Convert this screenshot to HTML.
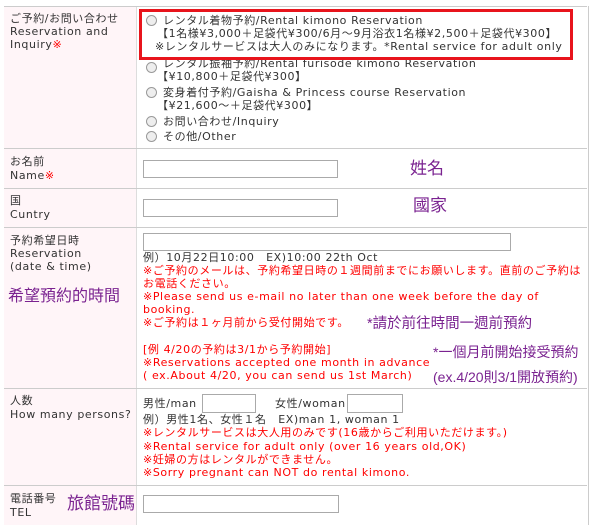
<!DOCTYPE html>
<html><head><meta charset="utf-8"><style>
body{margin:0;width:600px;height:525px;background:#fff;position:relative;overflow:hidden;font-family:"DejaVu Sans","Noto Sans CJK JP",sans-serif;font-size:11px;color:#333;letter-spacing:0.6px}
.a{position:absolute;white-space:nowrap;line-height:13px}
.r{color:#f00}
.p{color:#7a2290;font-size:15px;line-height:18px;font-family:"Liberation Sans","Noto Sans CJK TC",sans-serif;letter-spacing:0}
.lab{position:absolute;left:4px;width:132px;background:#fff5f8;border-right:1px solid #ddd}
.hl{position:absolute;left:4px;width:583px;height:1px;background:#ccc}
.in{position:absolute;border:1px solid #aaa;background:#fff;height:16px;box-sizing:border-box}
.rad{position:absolute;width:9px;height:9px;border-radius:50%;border:1px solid #999;background:#eee}
</style></head><body>
<div style="position:absolute;left:4px;top:6px;width:583px;height:519px;border-left:1px solid #ccc;border-right:1px solid #ccc"></div>
<div class="lab" style="top:7px;height:141px"></div>
<div class="lab" style="top:149px;height:39px"></div>
<div class="lab" style="top:189px;height:38px"></div>
<div class="lab" style="top:228px;height:160px"></div>
<div class="lab" style="top:389px;height:96px"></div>
<div class="lab" style="top:486px;height:39px"></div>
<div class="hl" style="top:6px"></div><div class="hl" style="top:148px"></div><div class="hl" style="top:188px"></div><div class="hl" style="top:227px"></div><div class="hl" style="top:388px"></div><div class="hl" style="top:485px"></div>

<div class="a" style="left:10px;top:12px">ご予約/お問い合わせ</div>
<div class="a" style="left:10px;top:25px">Reservation and</div>
<div class="a" style="left:10px;top:38px">Inquiry<span class="r">※</span></div>

<div class="rad" style="left:146px;top:15px"></div>
<div class="a" style="left:163px;top:14px">レンタル着物予約/Rental kimono Reservation</div>
<div class="a" style="left:157px;top:27px">【1名様¥3,000＋足袋代¥300/6月～9月浴衣1名様¥2,500＋足袋代¥300】</div>
<div class="a" style="left:155px;top:40px">※レンタルサービスは大人のみになります。*Rental service for adult only</div>
<div class="rad" style="left:146px;top:62px"></div>
<div class="a" style="left:163px;top:57px">レンタル振袖予約/Rental furisode kimono Reservation</div>
<div class="a" style="left:157px;top:70px">【¥10,800＋足袋代¥300】</div>
<div class="rad" style="left:146px;top:87px"></div>
<div class="a" style="left:163px;top:86px">変身着付予約/Gaisha &amp; Princess course Reservation</div>
<div class="a" style="left:157px;top:99px">【¥21,600～＋足袋代¥300】</div>
<div class="rad" style="left:146px;top:116px"></div>
<div class="a" style="left:163px;top:115px">お問い合わせ/Inquiry</div>
<div class="rad" style="left:146px;top:131px"></div>
<div class="a" style="left:163px;top:130px">その他/Other</div>
<div style="position:absolute;left:139px;top:9px;width:428px;height:45px;border:3px solid #e8141c;background:transparent"></div>

<div class="a" style="left:10px;top:155px">お名前</div>
<div class="a" style="left:10px;top:169px">Name<span class="r">※</span></div>
<div class="in" style="left:143px;top:160px;width:195px;height:18px"></div>
<div class="a p" style="left:410px;top:159px;font-size:17px;line-height:20px">姓名</div>

<div class="a" style="left:10px;top:194px">国</div>
<div class="a" style="left:10px;top:208px">Cuntry</div>
<div class="in" style="left:143px;top:199px;width:195px;height:18px"></div>
<div class="a p" style="left:413px;top:196px;font-size:17px;line-height:20px">國家</div>

<div class="a" style="left:10px;top:234px">予約希望日時</div>
<div class="a" style="left:10px;top:247px">Reservation</div>
<div class="a" style="left:10px;top:260px">(date &amp; time)</div>
<div class="a p" style="left:8px;top:287px;font-size:16px;line-height:20px">希望預約的時間</div>
<div class="in" style="left:143px;top:233px;width:368px;height:18px"></div>
<div class="a" style="left:143px;top:251px">例）10月22日10:00　EX)10:00 22th Oct</div>
<div class="a r" style="left:143px;top:264px">※ご予約のメールは、予約希望日時の１週間前までにお願いします。直前のご予約は</div>
<div class="a r" style="left:143px;top:277px">お電話ください。</div>
<div class="a r" style="left:143px;top:290px">※Please send us e-mail no later than one week before the day of</div>
<div class="a r" style="left:143px;top:303px">booking.</div>
<div class="a r" style="left:143px;top:316px">※ご予約は１ヶ月前から受付開始です。</div>
<div class="a p" style="left:367px;top:315px;font-size:14.5px">*請於前往時間一週前預約</div>
<div class="a r" style="left:143px;top:343px">[例 4/20の予約は3/1から予約開始]</div>
<div class="a r" style="left:143px;top:356px">※Reservations accepted one month in advance</div>
<div class="a r" style="left:143px;top:369px">( ex.About 4/20, you can send us 1st March)</div>
<div class="a p" style="left:433px;top:343px;font-size:14px">*一個月前開始接受預約</div>
<div class="a p" style="left:433px;top:368px;font-size:14px">(ex.4/20則3/1開放預約)</div>

<div class="a" style="left:10px;top:394px">人数</div>
<div class="a" style="left:10px;top:408px">How many persons?</div>
<div class="a" style="left:143px;top:397px">男性/man</div>
<div class="in" style="left:202px;top:394px;width:54px;height:19px"></div>
<div class="a" style="left:275px;top:397px">女性/woman</div>
<div class="in" style="left:347px;top:394px;width:56px;height:19px"></div>
<div class="a" style="left:143px;top:413px">例）男性1名、女性１名　EX)man 1, woman 1</div>
<div class="a r" style="left:143px;top:426px">※レンタルサービスは大人用のみです(16歳からご利用いただけます。)</div>
<div class="a r" style="left:143px;top:440px">※Rental service for adult only (over 16 years old,OK)</div>
<div class="a r" style="left:143px;top:453px">※妊婦の方はレンタルができません。</div>
<div class="a r" style="left:143px;top:466px">※Sorry pregnant can NOT do rental kimono.</div>

<div class="a" style="left:10px;top:492px">電話番号</div>
<div class="a" style="left:10px;top:506px">TEL</div>
<div class="a p" style="left:67px;top:494px;font-size:17px;line-height:20px">旅館號碼</div>
<div class="in" style="left:143px;top:495px;width:196px;height:18px"></div>
</body></html>
